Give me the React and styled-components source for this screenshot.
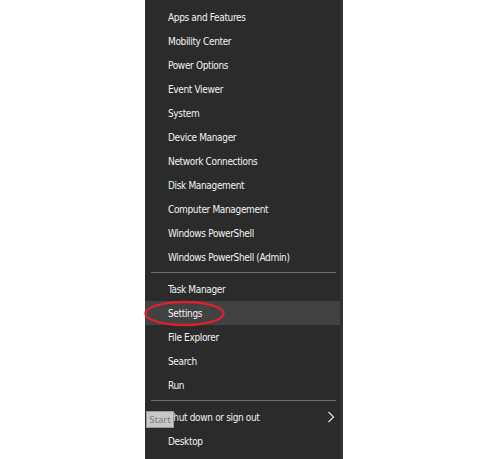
import styled, { createGlobalStyle } from "styled-components";

const GlobalStyle = createGlobalStyle`
  html, body {
    margin: 0;
    padding: 0;
    background: #ffffff;
  }
`;

const Page = styled.div`
  width: 500px;
  height: 459px;
  padding-left: 145px;
  box-sizing: border-box;
  overflow: hidden;
  background: #ffffff;
`;

const Menu = styled.div`
  position: relative;
  width: 198px;
  height: 459px;
  box-sizing: border-box;
  padding-top: 5px;
  background: #2b2b2b;
  border-right: 3px solid #323232;
  display: flex;
  flex-direction: column;
  font-family: "Liberation Sans Narrow", "DejaVu Sans Condensed", "Roboto", sans-serif;
`;

const Item = styled.div`
  position: relative;
  height: 24px;
  display: flex;
  align-items: center;
  justify-content: space-between;
  padding: 0 5px 0 23px;
  font-size: 10px;
  letter-spacing: -0.35px;
  color: #f2f2f2;
  background: ${(p) => (p.$active ? "#424242" : "transparent")};
`;

const Separator = styled.div`
  height: 1px;
  margin: 3px 4px 4px 6px;
  background: #6e6e6e;
`;

const Ring = styled.svg`
  position: absolute;
  left: 0;
  top: 0;
  overflow: visible;
`;

const Tooltip = styled.div`
  position: absolute;
  left: 1px;
  top: 411px;
  width: 28px;
  height: 17px;
  box-sizing: border-box;
  border: 1px solid #9a9a9a;
  background: #c8c8c8;
  color: #7a7a7a;
  font-family: "Noto Sans", sans-serif;
  font-size: 9.5px;
  display: flex;
  align-items: center;
  justify-content: center;
`;

const topItems = [
  "Apps and Features",
  "Mobility Center",
  "Power Options",
  "Event Viewer",
  "System",
  "Device Manager",
  "Network Connections",
  "Disk Management",
  "Computer Management",
  "Windows PowerShell",
  "Windows PowerShell (Admin)",
];

const midItems = ["Task Manager", "Settings", "File Explorer", "Search", "Run"];

function Chevron() {
  return (
    <svg width="8" height="12" viewBox="0 0 8 12">
      <path d="M1.5 1 L6.5 6 L1.5 11" fill="none" stroke="#d8d8d8" strokeWidth="1.3" />
    </svg>
  );
}

export default function App() {
  return (
    <>
      <GlobalStyle />
      <Page>
        <Menu>
          {topItems.map((t) => (
            <Item key={t}>{t}</Item>
          ))}
          <Separator />
          {midItems.map((t) => (
            <Item key={t} $active={t === "Settings"}>
              {t}
              {t === "Settings" && (
                <Ring width="80" height="26">
                  <ellipse cx="39.5" cy="12.5" rx="39" ry="11.5" fill="none" stroke="#d9232b" strokeWidth="2.4" />
                </Ring>
              )}
            </Item>
          ))}
          <Separator />
          <Item>
            Shut down or sign out
            <Chevron />
          </Item>
          <Item>Desktop</Item>
          <Tooltip>Start</Tooltip>
        </Menu>
      </Page>
    </>
  );
}
